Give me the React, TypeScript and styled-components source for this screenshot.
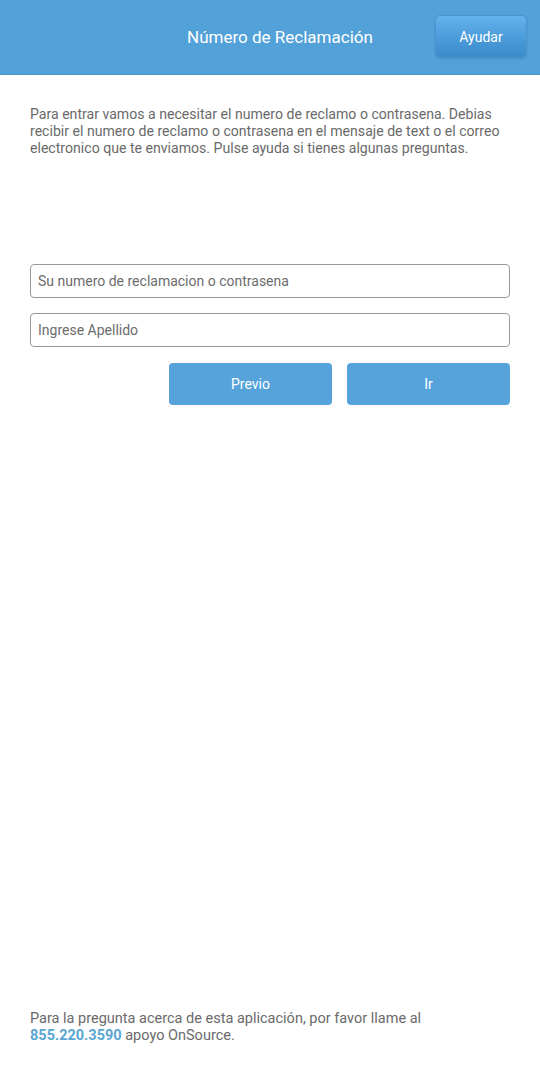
import React from "react";
import styled, { createGlobalStyle } from "styled-components";

const GlobalStyle = createGlobalStyle`
  html, body {
    margin: 0;
    padding: 0;
    background: #ffffff;
    font-family: Roboto, "Liberation Sans", Arial, sans-serif;
  }
`;

const Page = styled.div`
  display: flex;
  flex-direction: column;
  width: 540px;
  min-height: 1074px;
  background: #ffffff;
`;

const Header = styled.header`
  position: relative;
  display: flex;
  align-items: center;
  justify-content: center;
  height: 75px;
  background: #53a1d9;
  border-bottom: 1px solid #4a94cc;
  box-sizing: border-box;
`;

const Title = styled.h1`
  margin: 0;
  font-size: 17px;
  font-weight: 400;
  color: #ffffff;
  transform: translateX(10px);
`;

const HelpButton = styled.button`
  position: absolute;
  right: 13px;
  top: 15px;
  width: 92px;
  height: 43px;
  border: 1px solid #4a95d0;
  border-radius: 5px;
  background: linear-gradient(to bottom, #63b2ec 0%, #4d9ddb 50%, #3b8bcb 100%);
  color: #ffffff;
  font-family: inherit;
  font-size: 14px;
  box-shadow: 0 1px 2px rgba(0, 0, 0, 0.12);
`;

const Content = styled.main`
  display: flex;
  flex-direction: column;
  flex: 1;
  padding: 0 30px;
`;

const Intro = styled.p`
  margin: 31px 0 0;
  font-size: 14.1px;
  line-height: 17px;
  color: #6a6a6a;
`;

const Form = styled.form`
  display: flex;
  flex-direction: column;
  gap: 15px;
  margin-top: 107px;
`;

const Field = styled.input`
  box-sizing: border-box;
  width: 480px;
  height: 34px;
  padding: 0 7px;
  border: 1px solid #9a9a9a;
  border-radius: 4px;
  font-family: inherit;
  font-size: 14px;
  color: #333333;
  outline: none;

  &::placeholder {
    color: #6c6c6c;
  }
`;

const Actions = styled.div`
  display: flex;
  justify-content: flex-end;
  gap: 15px;
  margin-top: 1px;
`;

const ActionButton = styled.button`
  width: 163px;
  height: 42px;
  border: none;
  border-radius: 4px;
  background: #56a3db;
  color: #ffffff;
  font-family: inherit;
  font-size: 14px;
`;

const Footer = styled.footer`
  margin-top: auto;
  padding: 0 30px 30px;
  font-size: 14.5px;
  line-height: 17px;
  color: #6a6a6a;
`;

const Phone = styled.span`
  font-weight: 700;
  color: #5aa6d2;
`;

export default function App() {
  return (
    <Page>
      <GlobalStyle />
      <Header>
        <Title>Número de Reclamación</Title>
        <HelpButton type="button">Ayudar</HelpButton>
      </Header>
      <Content>
        <Intro>
          Para entrar vamos a necesitar el numero de reclamo o contrasena. Debias recibir el numero de reclamo o
          contrasena en el mensaje de text o el correo electronico que te enviamos. Pulse ayuda si tienes algunas
          preguntas.
        </Intro>
        <Form onSubmit={(e) => e.preventDefault()}>
          <Field placeholder="Su numero de reclamacion o contrasena" />
          <Field placeholder="Ingrese Apellido" />
          <Actions>
            <ActionButton type="button">Previo</ActionButton>
            <ActionButton type="submit">Ir</ActionButton>
          </Actions>
        </Form>
      </Content>
      <Footer>
        Para la pregunta acerca de esta aplicación, por favor llame al
        <br />
        <Phone>855.220.3590</Phone> apoyo OnSource.
      </Footer>
    </Page>
  );
}
